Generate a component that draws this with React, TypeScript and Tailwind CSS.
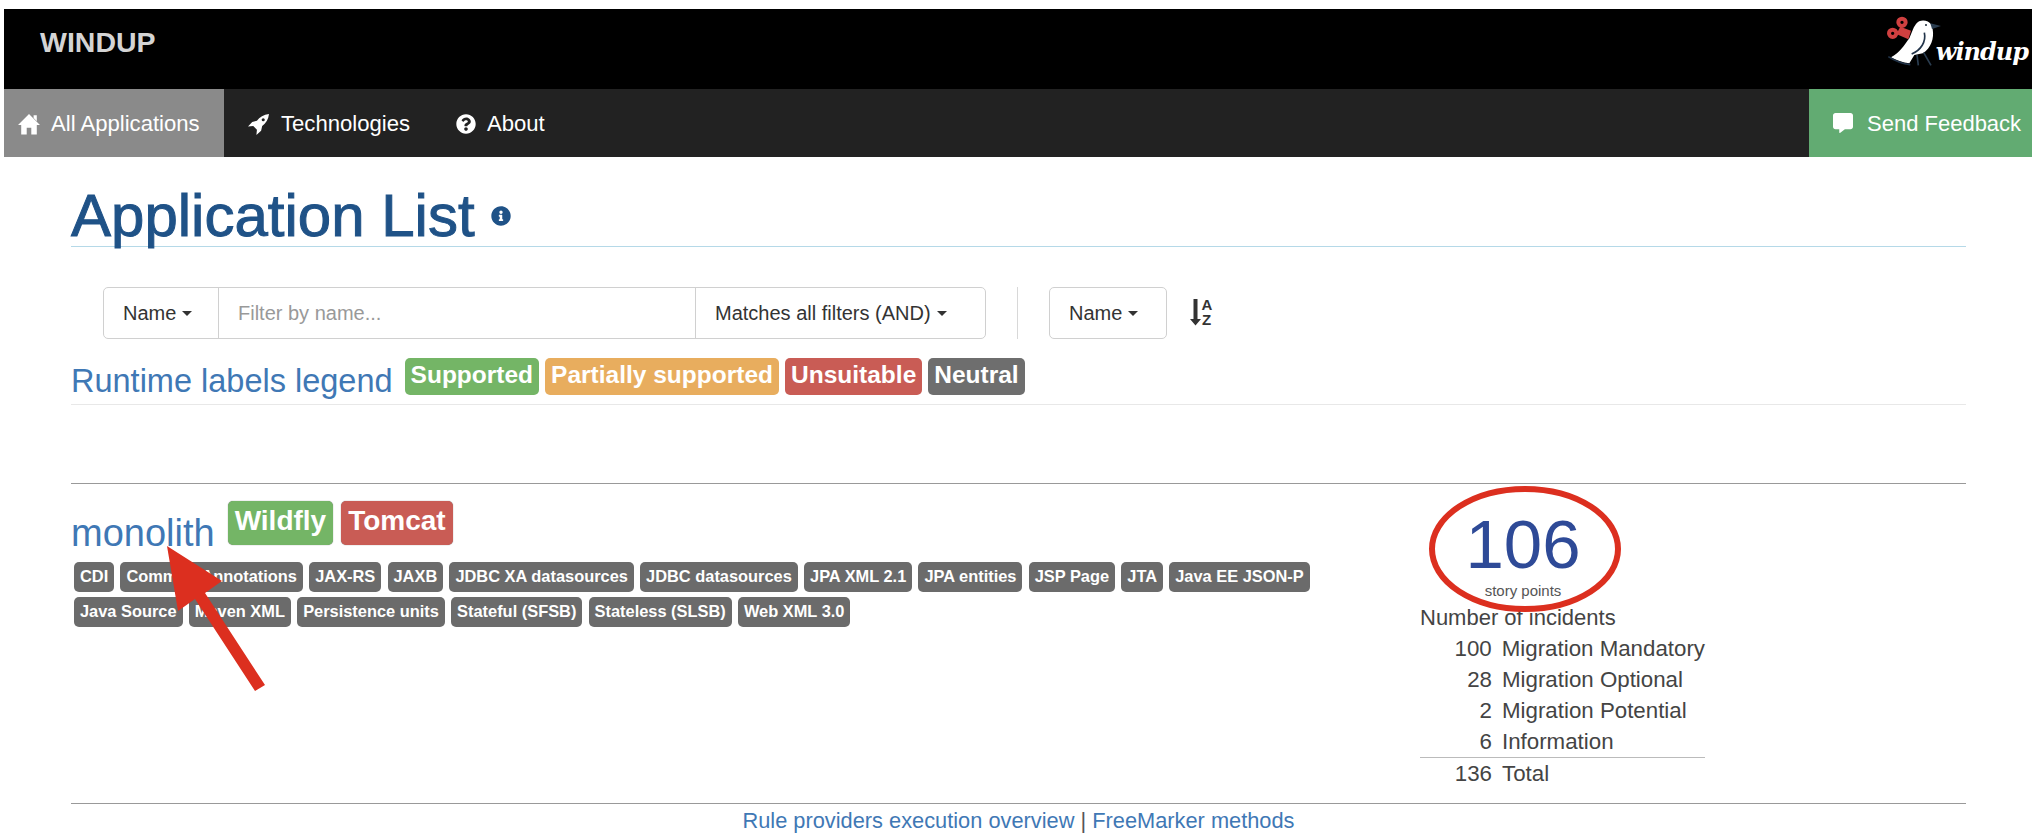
import { FaQuestionCircle, FaInfoCircle, FaCommentAlt } from "react-icons/fa";

const legend = [
  { label: "Supported", color: "bg-[#74b566]" },
  { label: "Partially supported", color: "bg-[#e8ad5e]" },
  { label: "Unsuitable", color: "bg-[#c95c55]" },
  { label: "Neutral", color: "bg-[#6e6e6e]" },
];

const tags = [
  "CDI",
  "Common Annotations",
  "JAX-RS",
  "JAXB",
  "JDBC XA datasources",
  "JDBC datasources",
  "JPA XML 2.1",
  "JPA entities",
  "JSP Page",
  "JTA",
  "Java EE JSON-P",
  "Java Source",
  "Maven XML",
  "Persistence units",
  "Stateful (SFSB)",
  "Stateless (SLSB)",
  "Web XML 3.0",
];

const incidents = [
  { count: 100, label: "Migration Mandatory" },
  { count: 28, label: "Migration Optional" },
  { count: 2, label: "Migration Potential" },
  { count: 6, label: "Information" },
];

function Caret() {
  return <span className="ml-[6px] inline-block h-0 w-0 border-x-[5px] border-t-[5px] border-x-transparent border-t-[#333]" />;
}

function HomeIcon() {
  return (
    <svg width="22" height="22" viewBox="0 0 24 24" fill="currentColor">
      <path d="M12 1 L24 13 L20.5 13 L20.5 23.5 L14.5 23.5 L14.5 16 L9.5 16 L9.5 23.5 L3.5 23.5 L3.5 13 L0 13 Z" />
      <path d="M17 2.5 H20.5 V9 L17 5.5 Z" />
    </svg>
  );
}

function RocketIcon() {
  return (
    <svg width="21" height="21" viewBox="0 0 20 20">
      <path
        d="M20 0 C15 0.5 11 3 8.5 6.5 L4 7.5 L0 12 L5 11.5 L8.5 15 L8 20 L12.5 16 L13.5 11.5 C17 9 19.5 5 20 0 Z"
        fill="currentColor"
      />
      <circle cx="14.5" cy="5.5" r="1.5" fill="#222" />
    </svg>
  );
}

function SortIcon() {
  return (
    <svg width="26" height="36" viewBox="0 -4 26 36" className="mt-[7px] ml-[22px] font-['Liberation_Sans'] text-[#333]" fill="currentColor">
      <path d="M4.5 1 H8.5 V21 H12 L6.5 27.5 L1 21 H4.5 Z" />
      <text x="12.5" y="12" fontSize="15" fontWeight="700">A</text>
      <text x="13" y="27" fontSize="15" fontWeight="700">Z</text>
    </svg>
  );
}

function Logo() {
  return (
    <div className="flex items-end">
      <svg width="62" height="60" viewBox="0 0 186 180">
        <circle cx="63" cy="37" r="11" fill="none" stroke="#cf4040" strokeWidth="12" />
        <circle cx="35" cy="70" r="11" fill="none" stroke="#cf4040" strokeWidth="12" />
        <path d="M58 50 L90 62 L82 88 L46 72 Z" fill="#cf4040" />
        <path d="M30 142 C55 130 70 105 85 85 C92 70 95 55 105 42 C115 28 140 28 152 45 L155 58 C160 85 150 115 125 130 L100 135 L85 160 C65 158 45 150 30 142 Z" fill="#fff" />
        <path d="M148 40 L180 48 L153 57 Z" fill="#2a3d50" />
        <circle cx="135" cy="45" r="3" fill="#1b2a38" />
        <path d="M130 68 C136 95 120 120 92 132 M22 140 C45 155 65 162 88 164" stroke="#22344a" strokeWidth="5" fill="none" />
        <path d="M108 135 L112 166 M128 128 L150 166" stroke="#2a3d50" strokeWidth="5" fill="none" />
      </svg>
      <span className="mb-[3px] ml-[-7px] font-['DejaVu_Serif'] text-[24px] leading-[30px] font-bold tracking-[-1px] text-white italic">windup</span>
    </div>
  );
}

export default function App() {
  return (
    <div className="relative h-[840px] w-[2036px] overflow-hidden bg-white pt-[9px] font-['Liberation_Sans',Arial,sans-serif] text-[#333]">
      {/* Header */}
      <div className="mx-[4px] flex h-[80px] items-start justify-between bg-black">
        <span className="mt-[18px] ml-[36px] text-[28.5px] leading-[30px] font-bold text-[#d4d4d4]">WINDUP</span>
        <div className="mt-[1px] mr-[4px]">
          <Logo />
        </div>
      </div>

      {/* Nav */}
      <div className="mx-[4px] flex h-[68px] items-stretch bg-[#222] text-[22.1px] text-white">
        <div className="flex w-[220px] items-center gap-[11px] bg-[#8a8a8a] pt-[2px] pl-[14px]">
          <HomeIcon />
          All Applications
        </div>
        <div className="flex items-center gap-[12px] pt-[2px] pl-[24px]">
          <RocketIcon />
          Technologies
        </div>
        <div className="ml-[46px] flex items-center gap-[11px] pt-[2px]">
          <FaQuestionCircle className="h-[20px] w-[20px]" />
          About
        </div>
        <div className="ml-auto flex w-[223px] items-center gap-[13px] bg-[#62ab72] pl-[23px] text-[22px]">
          <FaCommentAlt className="h-[20px] w-[22px]" />
          Send Feedback
        </div>
      </div>

      <div className="mx-[71px] w-[1895px]">
        {/* Title */}
        <div className="flex h-[90px] items-end border-b border-[#b5d9e8]">
          <h1 className="mb-[-6px] text-[60px] leading-[72px] font-normal text-[#1f5287] [-webkit-text-stroke:1px_#1f5287]">Application List</h1>
          <FaInfoCircle className="mb-[20px] ml-[16px] h-[20px] w-[20px] text-[#1f5287]" />
        </div>

        {/* Toolbar */}
        <div className="mt-[40px] ml-[32px] flex h-[52px] items-stretch text-[20px]">
          <div className="flex w-[883px] items-stretch rounded-[5px] border border-[#d0d0d0]">
            <div className="flex w-[114px] items-center pl-[19px]">
              Name
              <Caret />
            </div>
            <div className="flex w-[478px] items-center border-x border-[#d0d0d0] pl-[19px] text-[#999]">Filter by name...</div>
            <div className="flex flex-1 items-center pl-[19px]">
              Matches all filters (AND)
              <Caret />
            </div>
          </div>
          <div className="mx-[31px] w-px bg-[#d8d8d8]" />
          <div className="flex w-[118px] items-center rounded-[5px] border border-[#d0d0d0] pl-[19px]">
            Name
            <Caret />
          </div>
          <SortIcon />
        </div>

        {/* Legend */}
        <div className="mt-[19px] flex h-[47px] items-start gap-[6px] border-b border-[#e8e8e8]">
          <span className="mr-[6px] text-[32.5px] leading-[46px] text-[#3f78b5]">Runtime labels legend</span>
          {legend.map((item) => (
            <span key={item.label} className={`${item.color} h-[37px] rounded-[5px] px-[6px] text-[24.5px] leading-[34px] font-bold text-white`}>
              {item.label}
            </span>
          ))}
        </div>

        {/* Application row */}
        <div className="mt-[78px] flex h-[321px] border-y border-[#999]">
          <div className="w-[1349px]">
            <div className="mt-[17px] flex items-start gap-[8px]">
              <span className="mt-[9px] mr-[5px] text-[38px] leading-[46px] text-[#3f78b5]">monolith</span>
              <span className="h-[44px] rounded-[5px] bg-[#74b566] px-[7px] text-[28px] leading-[40px] font-bold text-white shadow-[0_0_1px_#666]">Wildfly</span>
              <span className="h-[44px] rounded-[5px] bg-[#c95c55] px-[7px] text-[28px] leading-[40px] font-bold text-white shadow-[0_0_1px_#666]">Tomcat</span>
            </div>
            <div className="mt-[6px] ml-[3px] flex w-[1260px] flex-wrap gap-x-[6.2px] gap-y-[5px]">
              {tags.map((tag) => (
                <span key={tag} className="h-[30px] rounded-[5px] bg-[#6b6b6b] px-[6px] text-[16.4px] leading-[29px] font-bold text-white">
                  {tag}
                </span>
              ))}
            </div>
          </div>

          <div className="w-[285px]">
            <div className="w-[206px] pt-[26px] text-center">
              <div className="text-[69px] leading-[70px] text-[#2e4a97]">106</div>
              <div className="mt-[3px] text-[15px] leading-[16px] text-[#555]">story points</div>
            </div>
            <div className="mt-[3px] text-[22px] leading-[31px] whitespace-nowrap text-[#444]">
              <div>Number of incidents</div>
              {incidents.map((row) => (
                <div key={row.label} className="flex text-[22.3px]">
                  <span className="w-[72px] text-right">{row.count}</span>
                  <span className="ml-[10px]">{row.label}</span>
                </div>
              ))}
              <div className="flex border-t border-[#bbb] text-[22.3px]">
                <span className="w-[72px] text-right">136</span>
                <span className="ml-[10px]">Total</span>
              </div>
            </div>
          </div>
        </div>

        {/* Footer */}
        <div className="pt-[4px] text-center text-[21.8px] leading-[26px] text-[#555]">
          <span className="text-[#3f78b5]">Rule providers execution overview</span> | <span className="text-[#3f78b5]">FreeMarker methods</span>
        </div>
      </div>

      {/* Red annotations drawn over the page */}
      <svg className="pointer-events-none absolute inset-0" width="2036" height="840" viewBox="0 0 2036 840">
        <ellipse cx="1525" cy="549" rx="93" ry="60" fill="none" stroke="#dc2f1f" strokeWidth="6" />
        <polygon points="167,546 222,581 205,593 265,685 255,691 195,599 178,611" fill="#dc2f1f" />
      </svg>
    </div>
  );
}
